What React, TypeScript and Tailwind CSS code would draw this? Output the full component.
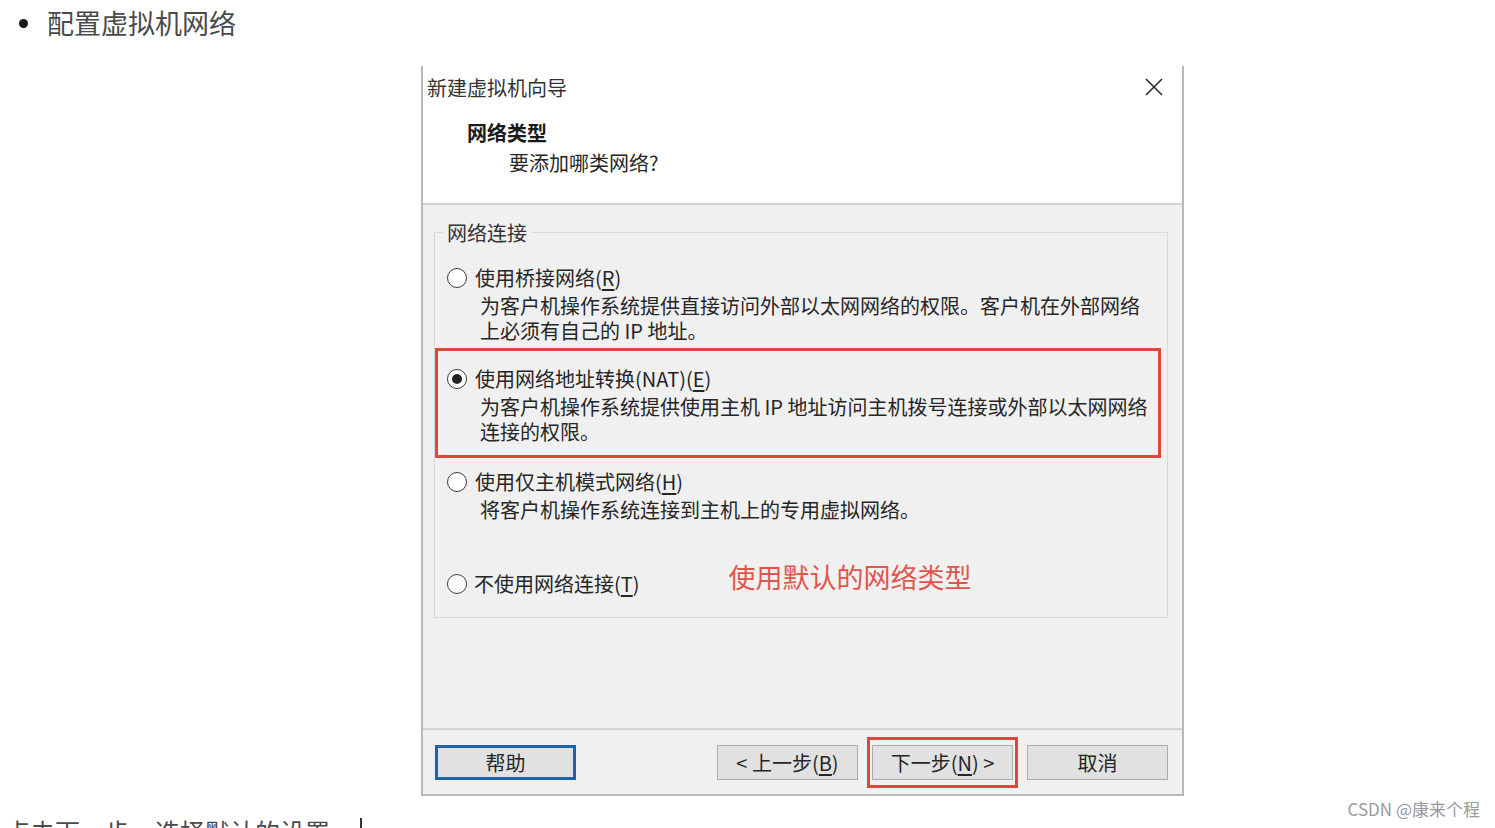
import React from "react";

const font = { fontFamily: '"Noto Sans CJK SC", "Noto Sans", sans-serif' };

function Radio({ checked }: { checked?: boolean }) {
  return (
    <span className="flex h-[20px] w-[20px] shrink-0 items-center justify-center rounded-full border-[1.5px] border-[#3a3a3a] bg-white">
      {checked && <span className="h-[10px] w-[10px] rounded-full bg-[#222]" />}
    </span>
  );
}

function Key({ k }: { k: string }) {
  return (
    <>
      (<span className="underline underline-offset-[3px]">{k}</span>)
    </>
  );
}

function Option({
  label,
  keyChar,
  desc,
  checked,
  gap = "ml-[8px]",
}: {
  label: string;
  keyChar: string;
  desc?: string[];
  checked?: boolean;
  gap?: string;
}) {
  return (
    <div>
      <div className="flex h-[25px] items-center">
        <Radio checked={checked} />
        <span className={`${gap} text-[20px] leading-[25px] text-[#262626]`}>
          {label}
          <Key k={keyChar} />
        </span>
      </div>
      {desc && (
        <div className="mt-[3px] pl-[33px] text-[20px] leading-[25px] text-[#262626]">
          {desc.map((d, i) => (
            <div key={i} className="h-[25px] whitespace-nowrap">
              {d}
            </div>
          ))}
        </div>
      )}
    </div>
  );
}

function Btn({ children, focus }: { children: React.ReactNode; focus?: boolean }) {
  return (
    <button
      className={`flex h-[35px] w-[141px] items-center justify-center bg-[#e1e1e1] text-[20px] leading-[25px] text-[#262626] ${
        focus ? "border-[3px] border-[#1f63a6]" : "border border-[#adadad]"
      }`}
    >
      {children}
    </button>
  );
}

export default function App() {
  return (
    <div className="relative h-[828px] overflow-hidden bg-white" style={font}>
      {/* page heading */}
      <div className="flex items-center pl-[19px] pt-[8px]">
        <span className="h-[9px] w-[9px] rounded-full bg-[#1a1a1a]" />
        <span className="ml-[19px] text-[27px] leading-[30px] text-[#4a4a4a]">配置虚拟机网络</span>
      </div>

      {/* wizard dialog */}
      <div className="ml-[421px] mt-[28px] flex h-[730px] w-[763px] flex-col border-x-2 border-b-2 border-[#b8b8b8] bg-[#f0f0f0]">
        <div className="relative h-[137px] bg-white">
          <div className="pl-[4px] pt-[9px] text-[20px] leading-[25px] text-[#333]">新建虚拟机向导</div>
          <svg
            className="absolute right-[19px] top-[12px]"
            width="18"
            height="18"
            viewBox="0 0 18 18"
            fill="none"
            stroke="#2a2a2a"
            strokeWidth="1.6"
          >
            <path d="M1 1 L17 17 M17 1 L1 17" />
          </svg>
          <div className="ml-[44px] mt-[20px] text-[20px] font-bold leading-[25px] text-[#1a1a1a]">网络类型</div>
          <div className="ml-[86px] mt-[5px] text-[20px] leading-[25px] text-[#262626]">要添加哪类网络?</div>
        </div>
        <div className="h-[2px] bg-[#d2d2d2]" />

        <div className="flex-1 px-[11px] pr-[14px] pt-[15px]">
          <fieldset className="border border-[#d9d9d9] pb-[21px]">
            <legend className="ml-[8px] px-[4px] text-[20px] leading-[25px] text-[#333]">网络连接</legend>
            <div className="mt-[20px] pl-[12px]">
              <Option
                label="使用桥接网络"
                keyChar="R"
                desc={["为客户机操作系统提供直接访问外部以太网网络的权限。客户机在外部网络", "上必须有自己的 IP 地址。"]}
              />
            </div>
            <div className="mr-[6px] mt-[5px] border-[3px] border-[#e0463e] pb-[11px] pl-[9px] pt-[15px]">
              <Option
                checked
                label="使用网络地址转换(NAT)"
                keyChar="E"
                desc={["为客户机操作系统提供使用主机 IP 地址访问主机拨号连接或外部以太网网络", "连接的权限。"]}
              />
            </div>
            <div className="mt-[11px] pl-[12px]">
              <Option label="使用仅主机模式网络" keyChar="H" desc={["将客户机操作系统连接到主机上的专用虚拟网络。"]} />
            </div>
            <div className="mt-[49px] flex items-center pl-[12px]">
              <Option label="不使用网络连接" keyChar="T" gap="ml-[7px]" />
              <span className="ml-[89px] -mt-[14px] text-[27px] leading-[30px] text-[#e0564c]">使用默认的网络类型</span>
            </div>
          </fieldset>
        </div>

        <div className="h-[2px] bg-[#d2d2d2]" />
        <div className="flex h-[64px] items-center pl-[12px] pr-[14px]">
          <Btn focus>帮助</Btn>
          <div className="flex-1" />
          <Btn>
            &lt; 上一步
            <Key k="B" />
          </Btn>
          <div className="ml-[9px] border-[3px] border-[#e0463e] px-[2px] py-[5px]">
            <Btn>
              下一步
              <Key k="N" /> &gt;
            </Btn>
          </div>
          <div className="ml-[9px]">
            <Btn>取消</Btn>
          </div>
        </div>
      </div>

      {/* next paragraph, cut off by the viewport */}
      <div className="mt-[20px] flex items-start pl-[5px]">
        <span className="text-[25px] leading-[30px] text-[#4a4a4a]">点击下一步，选择默认的设置</span>
        <span className="ml-[30px] mt-[2px] h-[26px] w-[2px] bg-[#333]" />
      </div>

      {/* watermark */}
      <div className="absolute bottom-[8px] right-[15px] text-[17px] leading-[22px] text-[#9a9a9a]">CSDN @康来个程</div>
    </div>
  );
}
